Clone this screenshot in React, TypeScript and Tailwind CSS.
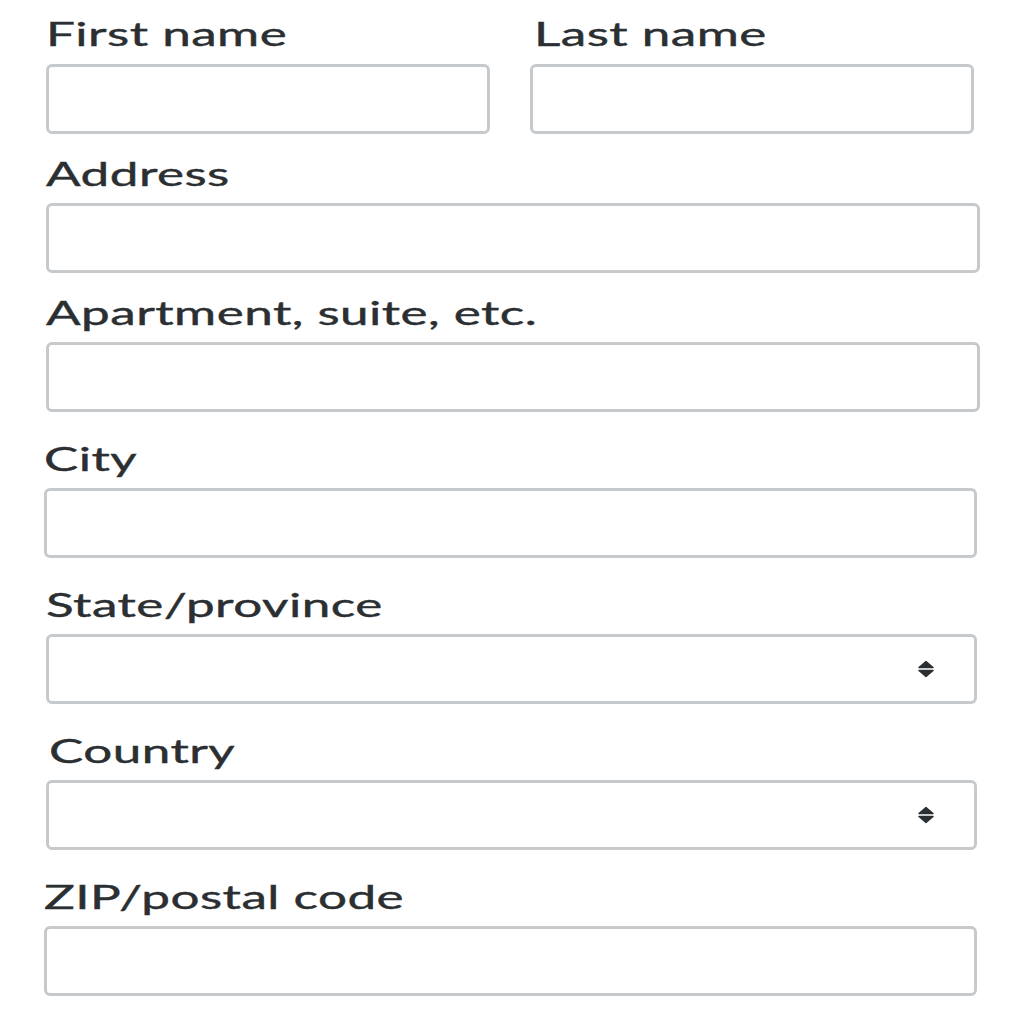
import React from "react";

function Label({ children }: { children: React.ReactNode }) {
  return (
    <div className="h-10 leading-10 text-[32px] text-[#2b2f32] whitespace-nowrap">
      <span className="inline-block origin-left scale-x-[1.6] tracking-[0.3px] [-webkit-text-stroke:0.4px_#2b2f32]">{children}</span>
    </div>
  );
}

function TextInput() {
  return <input type="text" className="block w-full h-[70px] rounded-md border-[3px] border-[#c6cacd] bg-white" />;
}

function SelectBox() {
  return (
    <div className="relative h-[70px] w-full rounded-md border-[3px] border-[#c6cacd] bg-white">
      <svg className="absolute right-[39px] top-[23px] w-[18px] h-[18px]" viewBox="0 0 18 18">
        <path d="M2 7.5 L9 1.5 L16 7.5 Z" fill="#2b2f32" stroke="#2b2f32" strokeWidth="1.5" strokeLinejoin="round" />
        <path d="M2 10.5 L9 16.5 L16 10.5 Z" fill="#2b2f32" stroke="#2b2f32" strokeWidth="1.5" strokeLinejoin="round" />
      </svg>
    </div>
  );
}

export default function App() {
  return (
    <div className="min-h-screen bg-white pt-[14px] pl-[46px] font-['Lato',sans-serif]">
      <div className="w-[934px]">
        <div className="flex gap-[40px]">
          <div className="w-[444px]">
            <Label>First name</Label>
            <div className="mt-[10px]"><TextInput /></div>
          </div>
          <div className="w-[444px]">
            <div className="pl-[4px]"><Label>Last name</Label></div>
            <div className="mt-[10px]"><TextInput /></div>
          </div>
        </div>

        <div className="mt-[20px]">
          <Label>Address</Label>
          <div className="mt-[9px]"><TextInput /></div>
        </div>

        <div className="mt-[20px]">
          <Label>Apartment, suite, etc.</Label>
          <div className="mt-[9px]"><TextInput /></div>
        </div>

        <div className="mt-[27px] w-[933px] -ml-[2px]">
          <Label>City</Label>
          <div className="mt-[9px]"><TextInput /></div>
        </div>

        <div className="mt-[27px] w-[931px]">
          <Label>State/province</Label>
          <div className="mt-[9px]"><SelectBox /></div>
        </div>

        <div className="mt-[27px] w-[931px]">
          <div className="pl-[3px]"><Label>Country</Label></div>
          <div className="mt-[9px]"><SelectBox /></div>
        </div>

        <div className="mt-[27px] w-[933px] -ml-[2px]">
          <Label>ZIP/postal code</Label>
          <div className="mt-[9px]"><TextInput /></div>
        </div>
      </div>
    </div>
  );
}
